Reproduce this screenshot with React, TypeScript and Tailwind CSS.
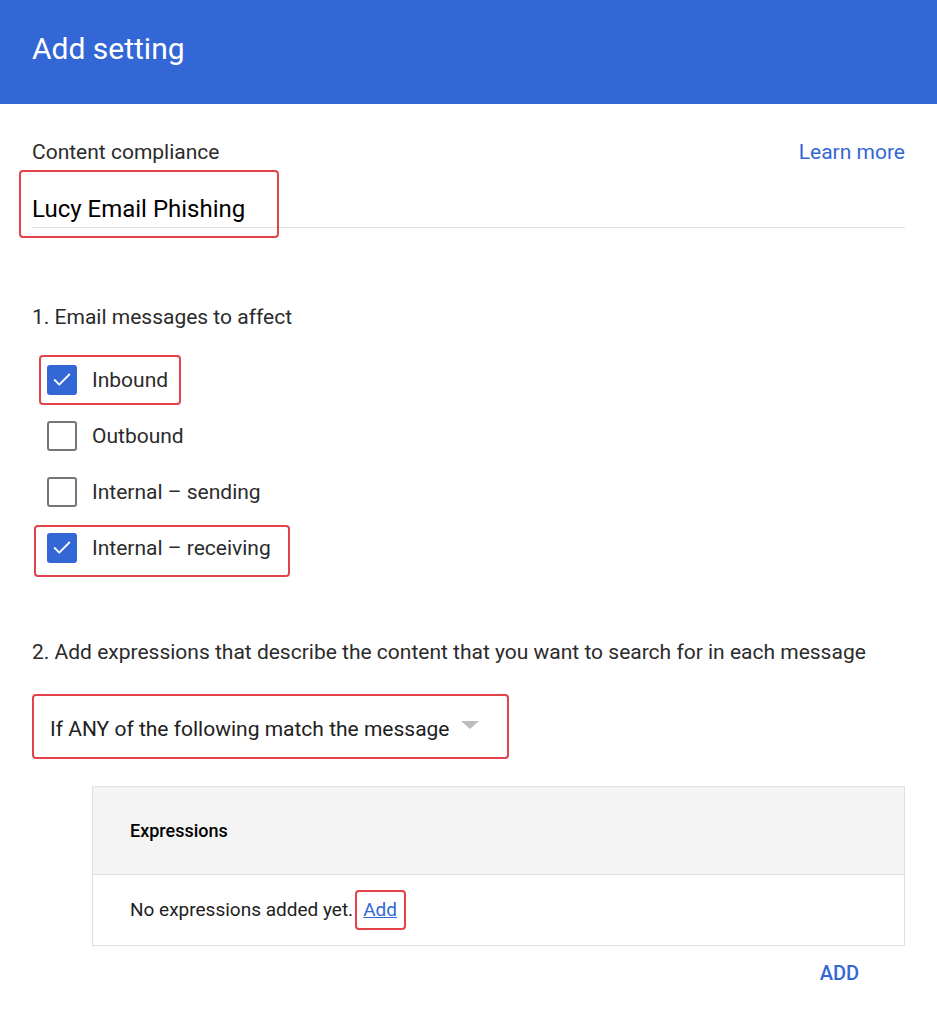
import { Check } from "lucide-react";

const font = { fontFamily: "Roboto, 'Noto Sans', sans-serif" };

function Mark({ className }: { className: string }) {
  return (
    <span
      className={`pointer-events-none absolute rounded-[4px] border-2 border-[#e2434a] ${className}`}
    />
  );
}

function Box({ checked }: { checked: boolean }) {
  if (checked) {
    return (
      <span className="flex h-[30px] w-[30px] items-center justify-center rounded-[3px] bg-[#3367d6]">
        <Check className="h-[22px] w-[22px] text-white" strokeWidth={2} />
      </span>
    );
  }
  return <span className="h-[30px] w-[30px] rounded-[3px] border-2 border-[#757575]" />;
}

export default function App() {
  const options = [
    { label: "Inbound", checked: true, mark: "-left-[8px] -right-[13px] -top-[10px] -bottom-[10px]" },
    { label: "Outbound", checked: false, mark: "" },
    { label: "Internal – sending", checked: false, mark: "" },
    { label: "Internal – receiving", checked: true, mark: "-left-[13px] -right-[19px] -top-[8px] -bottom-[14px]" },
  ];

  return (
    <div className="min-h-[1016px] w-[937px] bg-white text-[#212121]" style={font}>
      <header className="flex h-[104px] items-center bg-[#3367d6] px-8 pb-[6px]">
        <h1 className="text-[30px] leading-[36px] text-white">Add setting</h1>
      </header>

      <div className="px-8 pt-[36px]">
        <div className="flex items-center justify-between leading-[24px]">
          <span className="text-[21px] text-[#2b2b2b]">Content compliance</span>
          <a className="text-[21px] text-[#3367d6]">Learn more</a>
        </div>
        <div className="border-b border-[#e0e0e0] pt-[31px] pb-[1px] leading-[28px]">
          <span className="relative inline-block text-[24px] text-black">
            Lucy Email Phishing
            <Mark className="-left-[13px] -right-[34px] -top-[25px] -bottom-[15px]" />
          </span>
        </div>

        <div className="pt-[77px] text-[21px] leading-[24px] text-[#2b2b2b]">1. Email messages to affect</div>
        <div className="mt-[36px] flex flex-col gap-[26px] pl-[15px]">
          {options.map((o) => (
            <div key={o.label} className="relative flex h-[30px] w-fit items-center gap-[15px]">
              <Box checked={o.checked} />
              <span className="text-[21px] leading-[24px] text-[#2b2b2b]">{o.label}</span>
              {o.mark && <Mark className={o.mark} />}
            </div>
          ))}
        </div>

        <div className="pt-[77px] text-[21px] leading-[24px] text-[#2b2b2b]">
          2. Add expressions that describe the content that you want to search for in each message
        </div>
        <div className="relative mt-[30px] flex h-[65px] w-[477px] items-center pl-[18px] pt-[4px]">
          <span className="text-[21px] leading-[24px] text-[#212121]">If ANY of the following match the message</span>
          <span className="ml-[11px] mb-[8px] h-0 w-0 border-x-[9px] border-t-[8px] border-x-transparent border-t-[#bdbdbd]" />
          <Mark className="inset-0" />
        </div>

        <div className="ml-[60px] mt-[27px] border border-[#e0e0e0]">
          <div className="flex h-[87px] items-center bg-[#f4f4f4] px-[37px] text-[18px] font-medium text-black">
            Expressions
          </div>
          <div className="flex h-[71px] items-center border-t border-[#e0e0e0] px-[37px] text-[19px] text-[#212121]">
            No expressions added yet.
            <span className="relative ml-[10px] leading-[24px]">
              <a className="text-[#3367d6] underline">Add</a>
              <Mark className="-left-[8px] -right-[9px] -top-[8px] -bottom-[8px]" />
            </span>
          </div>
        </div>

        <div className="flex justify-end pr-[46px] pt-[15px]">
          <button className="text-[20px] leading-[24px] font-medium text-[#3367d6]">ADD</button>
        </div>
      </div>
    </div>
  );
}
